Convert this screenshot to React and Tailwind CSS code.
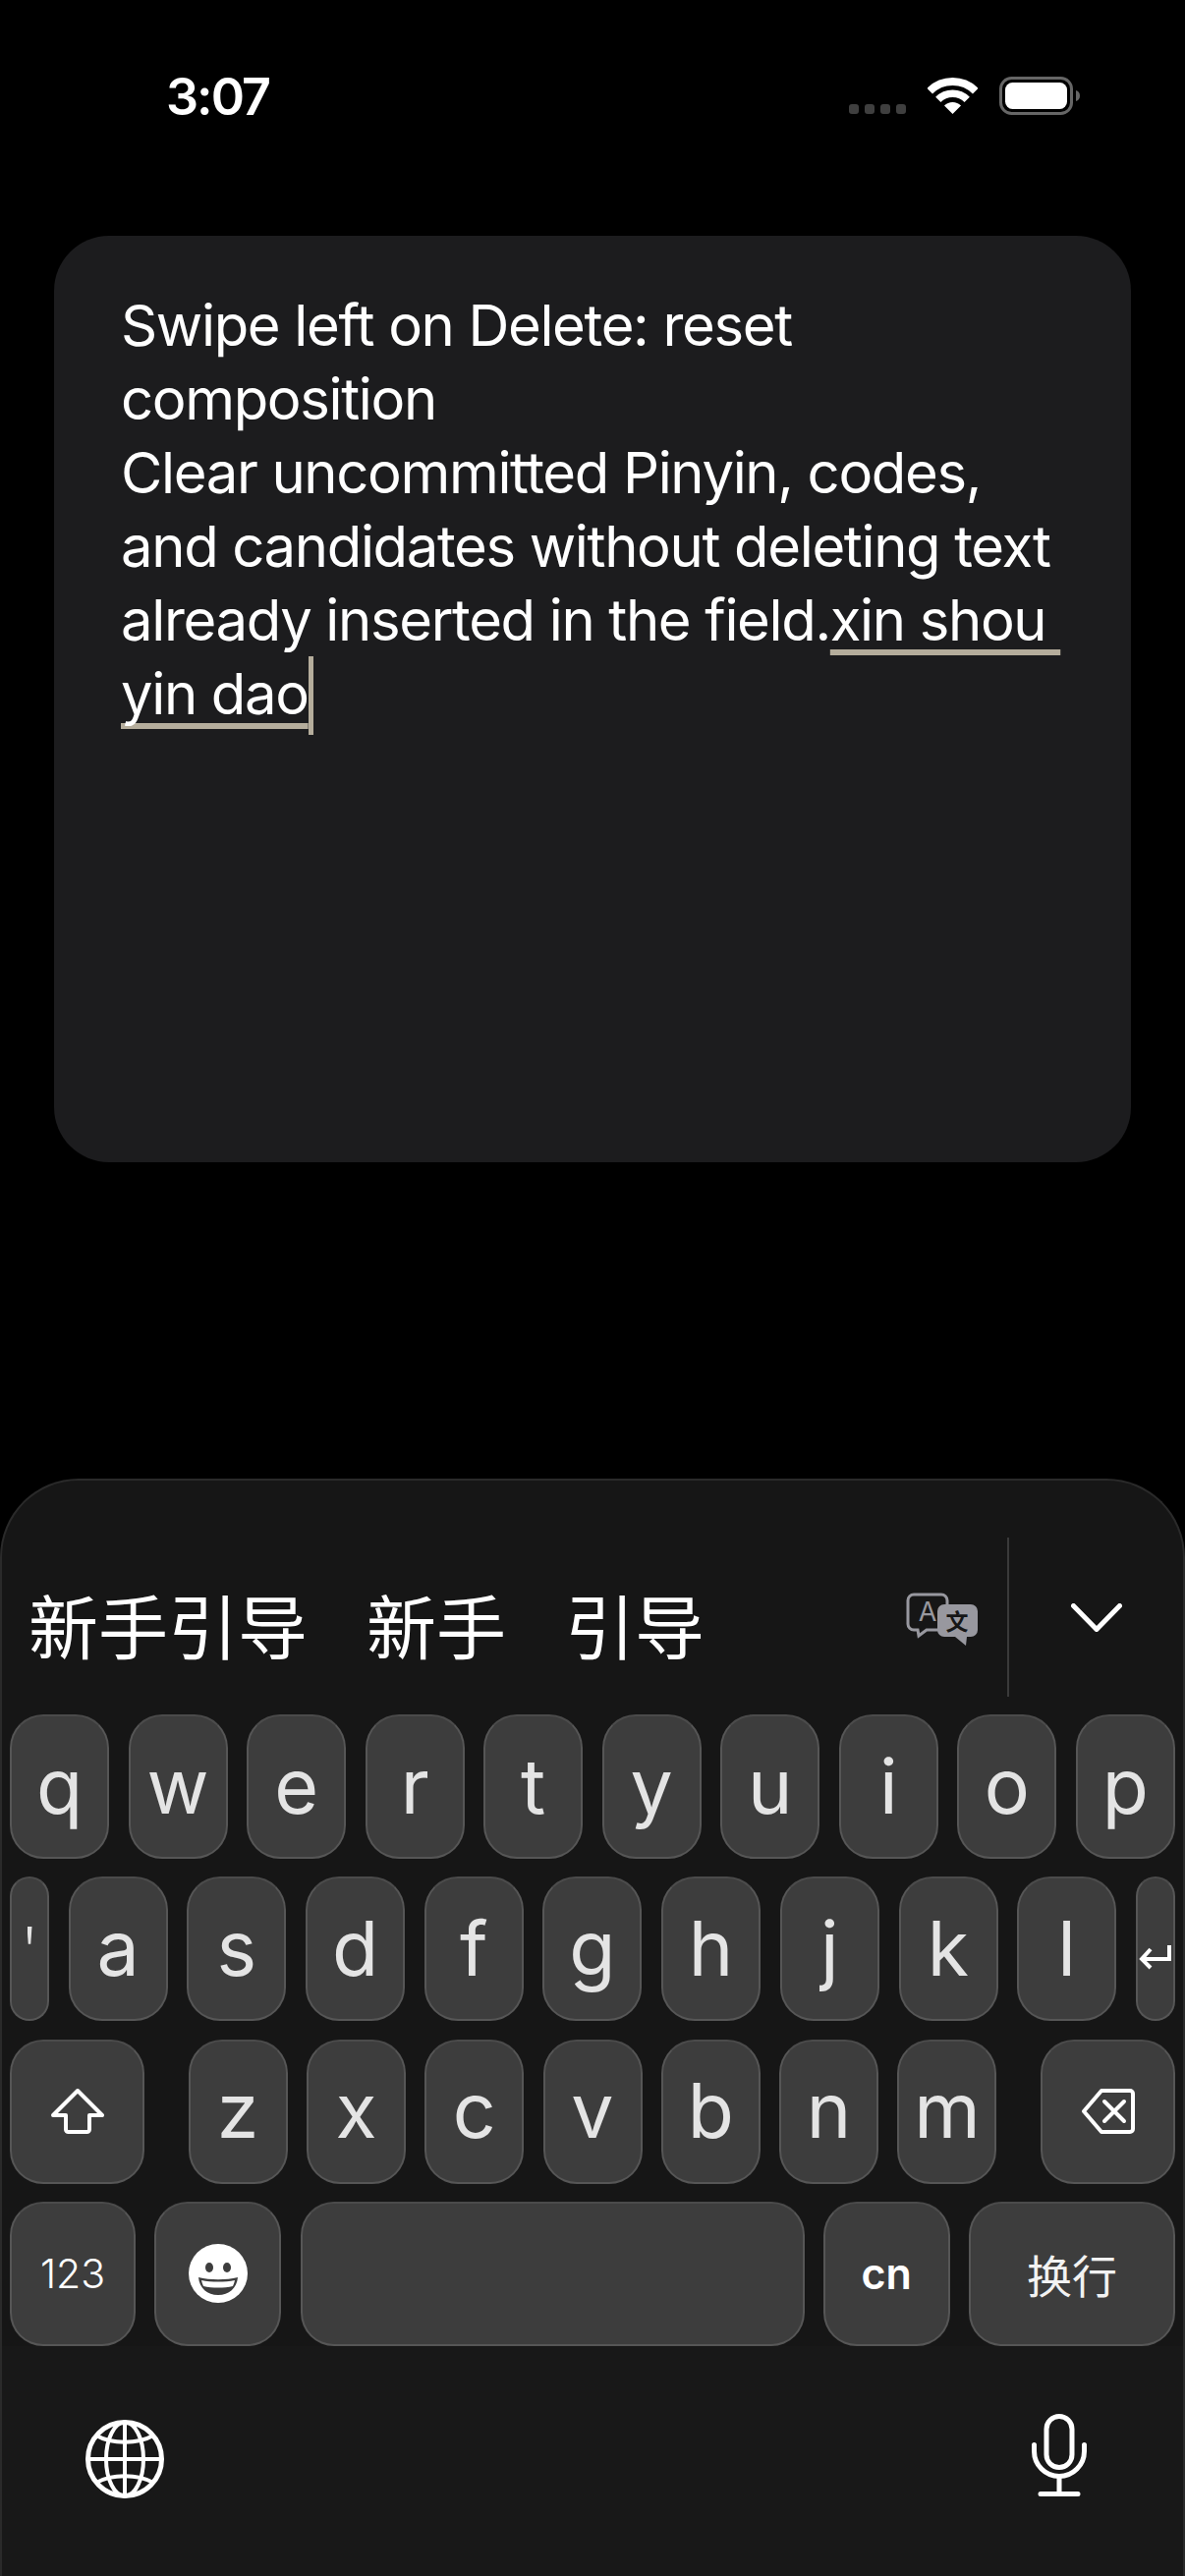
import React from "react";

const row1 = ["q", "w", "e", "r", "t", "y", "u", "i", "o", "p"];
const row2 = ["a", "s", "d", "f", "g", "h", "j", "k", "l"];
const row3 = ["z", "x", "c", "v", "b", "n", "m"];

const Key = ({ className = "", children }) => (
  <div
    className={`h-[147px] flex items-center justify-center rounded-[34px] bg-[#3d3d3d] border-2 border-[#565656] border-t-[#4b4b4b] shrink-0 ${className}`}
  >
    {children}
  </div>
);

const Letter = ({ value }) => (
  <Key className="w-[101px]">
    <span className="text-[77px] leading-none text-[#e4e4e4] font-normal -mt-[1px]">{value}</span>
  </Key>
);

const Wifi = () => (
  <svg width="51" height="37" viewBox="0 0 51 37" fill="none">
    <path d="M2.2 13.7A33 33 0 0 1 48.8 13.7" stroke="#fff" strokeWidth="8" />
    <path d="M10.8 22.3A20.75 20.75 0 0 1 40.2 22.3" stroke="#fff" strokeWidth="7.5" />
    <path d="M17 28.5A12 12 0 0 1 34 28.5L25.5 37Z" fill="#fff" />
  </svg>
);

const Battery = () => (
  <svg width="83" height="39" viewBox="0 0 83 39" fill="none">
    <rect x="1.5" y="1.5" width="72" height="36" rx="11" stroke="#666" strokeWidth="3" />
    <rect x="6" y="6" width="63" height="27" rx="7.5" fill="#fff" />
    <path d="M78 14c2.6.8 4 2.8 4 5.5s-1.400 4.700-4 5.500Z" fill="#666" />
  </svg>
);

const Translate = () => (
  <svg width="74" height="54" viewBox="0 0 74 54" fill="none">
    <path
      d="M8 2h28a6 6 0 0 1 6 6v24a6 6 0 0 1-6 6H21l-8 6-1-6H8a6 6 0 0 1-6-6V8a6 6 0 0 1 6-6Z"
      stroke="#98989f"
      strokeWidth="3"
    />
    <text x="22" y="29" textAnchor="middle" fontSize="27" fill="#98989f" fontFamily="Inter, sans-serif">
      A
    </text>
    <path
      d="M39 12h27a7 7 0 0 1 7 7v19a7 7 0 0 1-7 7h-4l-1 9-11-9H39a7 7 0 0 1-7-7V19a7 7 0 0 1 7-7Z"
      fill="#98989f"
    />
    <text x="52" y="38" textAnchor="middle" fontSize="23" fontWeight="700" fill="#161616" fontFamily="Noto Sans CJK SC, sans-serif">
      文
    </text>
  </svg>
);

const Chevron = () => (
  <svg width="52" height="29" viewBox="0 0 52 29" fill="none">
    <path d="M2.500 2.500 26 26.500 49.500 2.500" stroke="#fff" strokeWidth="5" strokeLinecap="round" strokeLinejoin="round" />
  </svg>
);

const Shift = () => (
  <svg width="54" height="46" viewBox="0 0 54 46" fill="none">
    <path
      d="M27 2 52 27H39V41.500a2.500 2.500 0 0 1-2.500 2.500h-19a2.500 2.500 0 0 1-2.500-2.500V27H2Z"
      stroke="#fff"
      strokeWidth="4"
      strokeLinejoin="round"
    />
  </svg>
);

const Backspace = () => (
  <svg width="54" height="46" viewBox="0 0 54 46" fill="none">
    <path
      d="M20 2h29a3 3 0 0 1 3 3v36a3 3 0 0 1-3 3H20L2 23Z"
      stroke="#fff"
      strokeWidth="4"
      strokeLinejoin="round"
    />
    <path d="M23 13 43 33M43 13 23 33" stroke="#fff" strokeWidth="4" strokeLinecap="round" />
  </svg>
);

const Return = () => (
  <svg width="33" height="25" viewBox="0 0 33 25" fill="none">
    <path d="M31 0V14H3" stroke="#fff" strokeWidth="4" />
    <path d="M12 4 3 14l9 9" stroke="#fff" strokeWidth="4" />
  </svg>
);

const Emoji = () => (
  <svg width="60" height="60" viewBox="0 0 60 60">
    <circle cx="30" cy="30" r="30" fill="#fff" />
    <ellipse cx="21" cy="24" rx="4" ry="5" fill="#3d3d3d" />
    <ellipse cx="39" cy="24" rx="4" ry="5" fill="#3d3d3d" />
    <path d="M10 34c12 3 28 3 40 0-1 11-9 18-20 18S11 45 10 34Z" fill="#3d3d3d" />
    <path d="M13 37c10 2 24 2 34 0-.5 2-1 4-2 6-9 2-21 2-30 0-1-2-1.500-4-2-6Z" fill="#fff" />
  </svg>
);

const Globe = () => (
  <svg width="80" height="80" viewBox="0 0 80 80" fill="none" stroke="#fff">
    <circle cx="40" cy="40" r="37.500" strokeWidth="5" />
    <ellipse cx="40" cy="40" rx="19" ry="37.500" strokeWidth="4" />
    <path d="M40 3v74M3 40h74" strokeWidth="4" />
    <path d="M11 16c16 9 42 9 58 0M11 64c16-9 42-9 58 0" strokeWidth="4" />
  </svg>
);

const Mic = () => (
  <svg width="56" height="84" viewBox="0 0 56 84" fill="none" stroke="#fff" strokeWidth="5" strokeLinecap="round">
    <rect x="15" y="2.500" width="26" height="52" rx="13" />
    <path d="M2.500 31.500V38a25.500 25.500 0 0 0 51 0v-6.500" />
    <path d="M28 64v17.500M9 81.500h38" />
  </svg>
);

const App = () => {
  return (
    <div className="w-[1206px] h-[2622px] bg-black flex flex-col overflow-hidden font-['Inter','Noto_Sans_CJK_SC',sans-serif]">
      {/* status bar */}
      <div className="h-[240px] shrink-0 pt-[79px] pl-[169px] pr-[106px] flex items-start justify-between">
        <span className="text-[52px] leading-[40px] font-semibold tracking-[-2px] text-white">3:07</span>
        <div className="flex items-start -mt-[1px]">
          <div className="flex gap-[6px] mt-[28px] mr-[22px]">
            <div className="w-[10px] h-[10px] rounded-[3px] bg-[#3f3f3f]" />
            <div className="w-[10px] h-[10px] rounded-[3px] bg-[#3f3f3f]" />
            <div className="w-[10px] h-[10px] rounded-[3px] bg-[#3f3f3f]" />
            <div className="w-[10px] h-[10px] rounded-[3px] bg-[#3f3f3f]" />
          </div>
          <div className="mt-[1px] mr-[22px]">
            <Wifi />
          </div>
          <Battery />
        </div>
      </div>

      {/* text field */}
      <div className="mx-[55px] h-[943px] shrink-0 rounded-[56px] bg-[#1c1c1e] pl-[68px] pt-[54px]">
        <p className="text-[58px] leading-[75px] tracking-[-1.35px] text-white whitespace-nowrap font-normal">
          Swipe left on Delete: reset
          <br />
          composition
          <br />
          Clear uncommitted Pinyin, codes,
          <br />
          and candidates without deleting text
          <br />
          already inserted in the field.
          <span className="underline decoration-[#b5ad9c] decoration-[length:6px] underline-offset-[9px] [text-decoration-skip-ink:none]">
            xin shou&nbsp;
            <br />
            yin dao
          </span>
          <span className="inline-block w-[5px] h-[80px] -my-[20px] bg-[#b5ad9c] align-[-1px]" />
        </p>
      </div>

      {/* keyboard */}
      <div className="mt-auto h-[1117px] shrink-0 rounded-t-[80px] bg-[#161616] border-t-2 border-x-2 border-[#2a2a2a] flex flex-col">
        <div className="h-[238px] shrink-0 flex pl-[27px] pr-[71px] relative">
          <div className="flex items-center gap-[60px] text-[71px] leading-none text-white font-['Noto_Sans_CJK_SC',sans-serif] font-normal pt-[52px]">
            <span>新手引导</span>
            <span>新手</span>
            <span>引导</span>
          </div>
          <div className="ml-auto flex items-start pt-[58px]">
            <div className="pt-[56px] mr-[29px]">
              <Translate />
            </div>
            <div className="w-[2px] h-[162px] bg-[#3a3a3a] mr-[63px]" />
            <div className="pt-[67px] -mr-[9px]">
              <Chevron />
            </div>
          </div>
        </div>

        <div className="flex flex-col gap-[18.330px] px-[8px]">
          <div className="flex justify-between">
            {row1.map((k) => (
              <Letter key={k} value={k} />
            ))}
          </div>
          <div className="flex justify-between">
            <Key className="w-[40px]">
              <span className="w-[5px] h-[18px] bg-[#e4e4e4] -mt-[28px] [clip-path:polygon(0_0,100%_0,75%_100%,25%_100%)]" />
            </Key>
            {row2.map((k) => (
              <Letter key={k} value={k} />
            ))}
            <Key className="w-[40px]">
              <span className="mt-[18px]">
                <Return />
              </span>
            </Key>
          </div>
          <div className="flex justify-between">
            <Key className="w-[137px]">
              <Shift />
            </Key>
            <div className="flex gap-[19.300px]">
              {row3.map((k) => (
                <Letter key={k} value={k} />
              ))}
            </div>
            <Key className="w-[137px]">
              <Backspace />
            </Key>
          </div>
          <div className="flex justify-between">
            <Key className="w-[128px]">
              <span className="text-[41px] leading-none text-white font-light">123</span>
            </Key>
            <Key className="w-[129px]">
              <Emoji />
            </Key>
            <Key className="w-[513px]" />
            <Key className="w-[129px]">
              <span className="text-[43px] leading-none text-white font-semibold">cn</span>
            </Key>
            <Key className="w-[210px]">
              <span className="text-[46px] leading-none text-[#f2f2f2] font-['Noto_Sans_CJK_SC',sans-serif] font-normal">换行</span>
            </Key>
          </div>
        </div>

        <div className="flex-1 bg-[#181818] flex items-start justify-between pl-[85px] pr-[98px] pt-[69px]">
          <div className="mt-[6px]">
            <Globe />
          </div>
          <Mic />
        </div>
      </div>
    </div>
  );
};

export default App;
